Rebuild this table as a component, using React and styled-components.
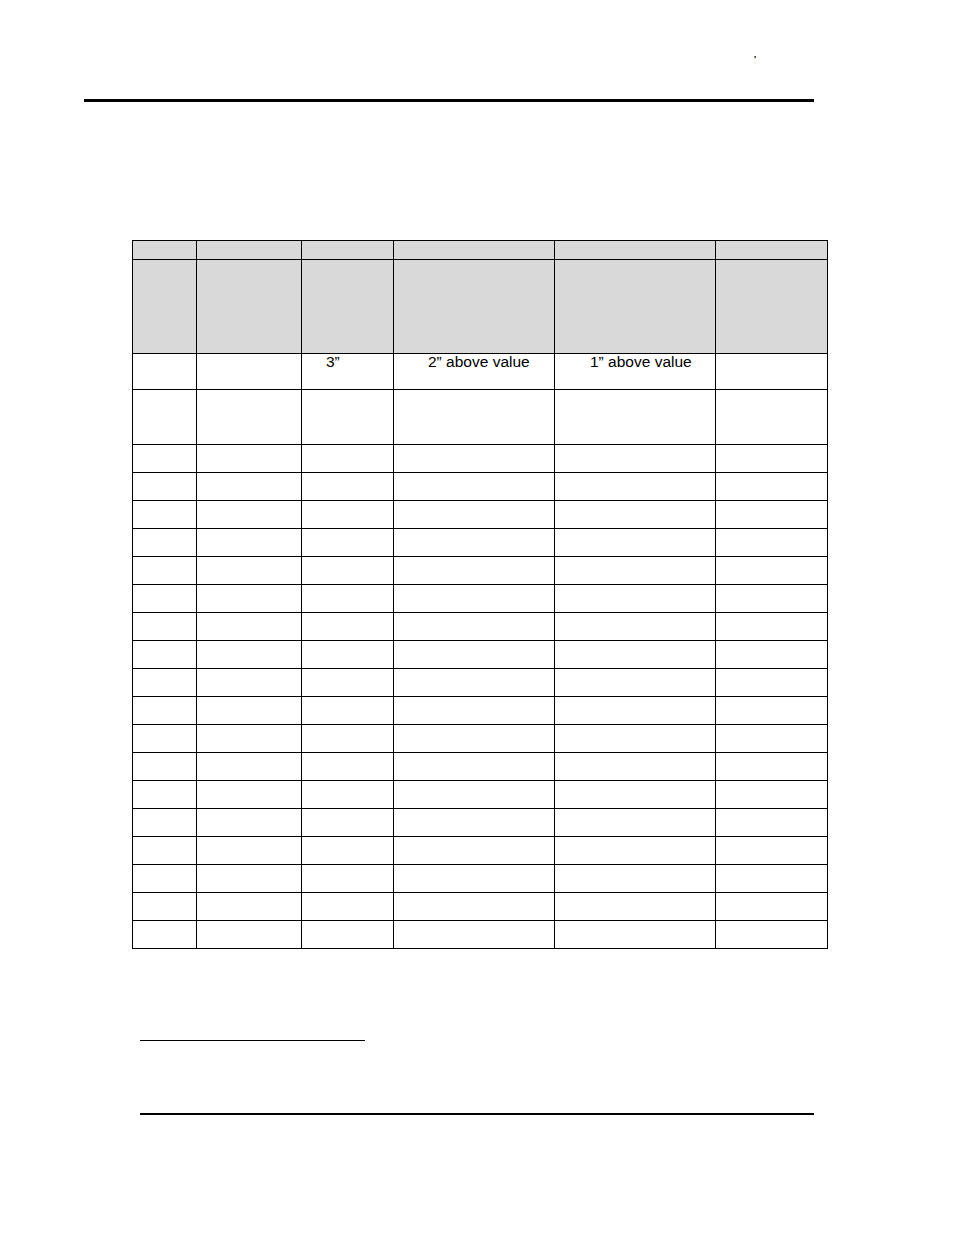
import React from 'react';
import styled, { createGlobalStyle } from 'styled-components';

const GlobalStyle = createGlobalStyle`
  html, body {
    margin: 0;
    padding: 0;
    background: #ffffff;
  }
  body {
    font-family: "Liberation Sans", Arial, sans-serif;
    color: #000000;
  }
`;

const Page = styled.div`
  width: 954px;
  min-height: 1235px;
  display: flex;
  flex-direction: column;
  align-items: flex-start;
`;

const Header = styled.div`
  height: 99px;
  box-sizing: border-box;
  padding: 55px 0 0 754px;
  font-size: 9px;
  line-height: 9px;
  font-weight: bold;
`;

const Rule = styled.div`
  margin-left: ${p => p.left}px;
  margin-top: ${p => p.top || 0}px;
  width: ${p => p.width}px;
  height: ${p => p.thick}px;
  background: #000000;
`;

const Table = styled.div`
  margin: 138px 0 0 132px;
  display: grid;
  grid-template-columns: 63px 104px 91px 160px 160px 111px;
  gap: 1px;
  padding: 1px;
  background: #000000;
`;

const Cell = styled.div`
  height: ${p => p.h}px;
  background: ${p => (p.shaded ? '#d9d9d9' : '#ffffff')};
  padding-left: ${p => p.indent || 0}px;
  font-size: 15.5px;
  line-height: 15.5px;
  white-space: nowrap;
`;

const columns = 6;

const rows = [
  { h: 18, shaded: true },
  { h: 93, shaded: true },
  { h: 35, cells: { 2: ['3”', 24], 3: ['2” above value', 34], 4: ['1” above value', 35] } },
  { h: 54 },
  ...Array.from({ length: 18 }, () => ({ h: 27 })),
];

export default function App() {
  return (
    <>
      <GlobalStyle />
      <Page>
        <Header>'</Header>
        <Rule left={84} width={730} thick={3} />
        <Table>
          {rows.map((row, r) =>
            Array.from({ length: columns }, (_, c) => {
              const content = row.cells && row.cells[c];
              return (
                <Cell key={`${r}-${c}`} h={row.h} shaded={row.shaded} indent={content ? content[1] : 0}>
                  {content ? content[0] : null}
                </Cell>
              );
            })
          )}
        </Table>
        <Rule left={140} top={91} width={225} thick={1} />
        <Rule left={140} top={72} width={674} thick={2} />
      </Page>
    </>
  );
}
